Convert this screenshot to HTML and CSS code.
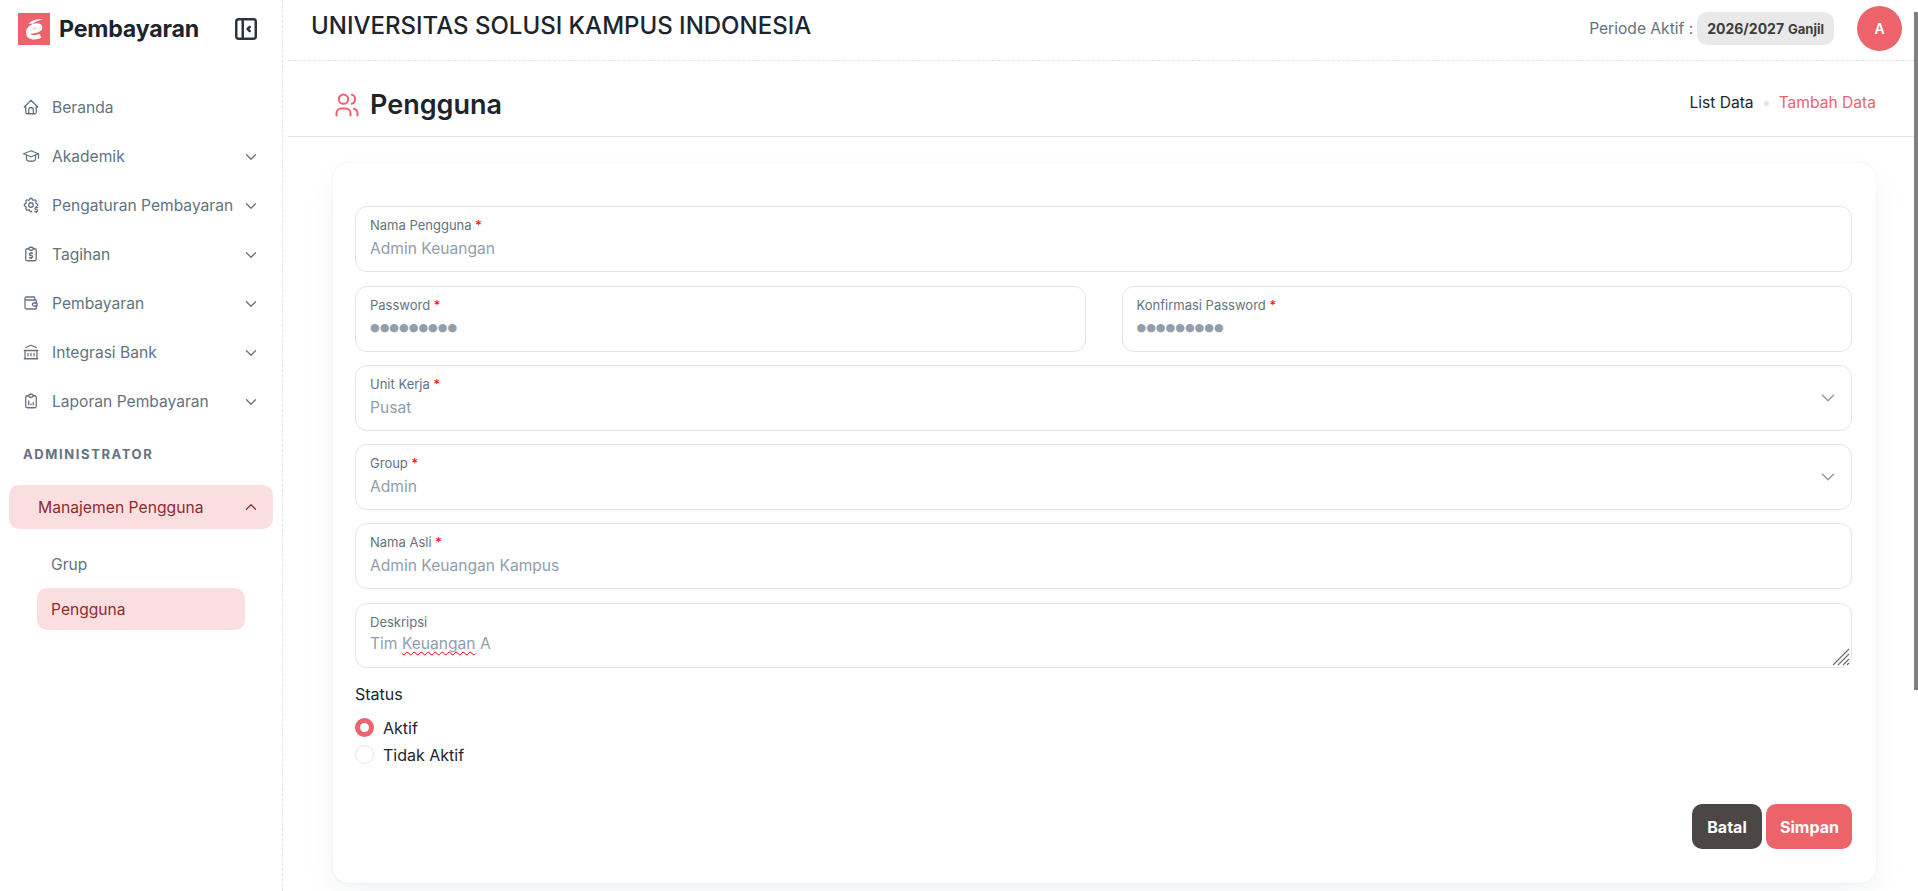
FILE: index.html
```html
<!DOCTYPE html>
<html lang="id">
<head>
<meta charset="utf-8">
<title>Pengguna - Pembayaran</title>
<link rel="stylesheet" href="styles.css">
</head>
<body>
<aside class="sidebar">
  <div class="brand">
    <svg class="logo" viewBox="0 0 32 32"><rect class="logo-bg" width="32" height="32"/><path d="M9.5 18.8 C14 19 20.5 17.5 22 15 C23 12.8 19 11.8 15.5 13 C11 14.8 9 18.5 10.5 21.8 C12 24.8 17.5 25.2 22.5 22.8" stroke="#fff" stroke-width="4.4" stroke-linecap="butt"/><path class="logo-cap" d="M10.5 10.5 C14 7 20 5.6 25 6.6 C20.5 7.6 17.5 8.6 14.5 11 Z"/></svg>
    <span class="brand-name">Pembayaran</span>
    <svg class="collapse" viewBox="0 0 24 24"><rect x="3" y="3" width="18" height="18" rx="2"/><path d="M9 3v18M15.5 10l-2 2l2 2"/></svg>
  </div>
  <nav class="nav">
    <a class="item"><svg class="ico" viewBox="0 0 24 24"><path d="M5 12l-2 0l9 -9l9 9l-2 0"/><path d="M5 12v7a2 2 0 0 0 2 2h10a2 2 0 0 0 2 -2v-7"/><path d="M9 21v-6a2 2 0 0 1 2 -2h2a2 2 0 0 1 2 2v6"/></svg><span class="lbl">Beranda</span></a>
    <a class="item"><svg class="ico" viewBox="0 0 24 24"><path d="M22 9l-10 -4l-10 4l10 4l10 -4v6"/><path d="M6 10.6v5.4a6 3 0 0 0 12 0v-5.4"/></svg><span class="lbl">Akademik</span><svg class="chev" viewBox="0 0 24 24"><path d="M6 9l6 6l6 -6"/></svg></a>
    <a class="item"><svg class="ico" viewBox="0 0 24 24"><path d="M10.325 4.317c.426 -1.756 2.924 -1.756 3.35 0a1.724 1.724 0 0 0 2.573 1.066c1.543 -.94 3.31 .826 2.37 2.37a1.724 1.724 0 0 0 1.065 2.572c1.756 .426 1.756 2.924 0 3.35a1.724 1.724 0 0 0 -1.066 2.573c.94 1.543 -.826 3.31 -2.37 2.37a1.724 1.724 0 0 0 -2.572 1.065c-.426 1.756 -2.924 1.756 -3.35 0a1.724 1.724 0 0 0 -2.573 -1.066c-1.543 .94 -3.31 -.826 -2.37 -2.37a1.724 1.724 0 0 0 -1.065 -2.572c-1.756 -.426 -1.756 -2.924 0 -3.35a1.724 1.724 0 0 0 1.066 -2.573c-.94 -1.543 .826 -3.31 2.37 -2.37c1 .608 2.296 .07 2.572 -1.065z"/><circle cx="12" cy="12" r="3"/><circle class="knock" cx="19" cy="19" r="5.5"/><path d="M21 15.5h-2.5a1.2 1.2 0 0 0 0 2.6h1a1.2 1.2 0 0 1 0 2.6h-2.5M19 14v1.5m0 5.2v1.3"/></svg><span class="lbl">Pengaturan Pembayaran</span><svg class="chev" viewBox="0 0 24 24"><path d="M6 9l6 6l6 -6"/></svg></a>
    <a class="item"><svg class="ico" viewBox="0 0 24 24"><path d="M9 5h-2a2 2 0 0 0 -2 2v12a2 2 0 0 0 2 2h10a2 2 0 0 0 2 -2v-12a2 2 0 0 0 -2 -2h-2"/><path d="M9 5a2 2 0 0 1 2 -2h2a2 2 0 0 1 2 2a2 2 0 0 1 -2 2h-2a2 2 0 0 1 -2 -2z"/><path d="M14 11h-2.5a1.5 1.5 0 0 0 0 3h1a1.5 1.5 0 0 1 0 3h-2.5"/><path d="M12 17v1m0 -8v1"/></svg><span class="lbl">Tagihan</span><svg class="chev" viewBox="0 0 24 24"><path d="M6 9l6 6l6 -6"/></svg></a>
    <a class="item"><svg class="ico" viewBox="0 0 24 24"><path d="M17 8v-3a1 1 0 0 0 -1 -1h-10a2 2 0 0 0 0 4h12a1 1 0 0 1 1 1v3m0 4v3a1 1 0 0 1 -1 1h-12a2 2 0 0 1 -2 -2v-12"/><path d="M20 12v4h-4a2 2 0 0 1 0 -4h4"/></svg><span class="lbl">Pembayaran</span><svg class="chev" viewBox="0 0 24 24"><path d="M6 9l6 6l6 -6"/></svg></a>
    <a class="item"><svg class="ico" viewBox="0 0 24 24"><path d="M3 21h18M3 10h18M5 6l7 -3l7 3M4 10v11M20 10v11M8 14v3M12 14v3M16 14v3"/></svg><span class="lbl">Integrasi Bank</span><svg class="chev" viewBox="0 0 24 24"><path d="M6 9l6 6l6 -6"/></svg></a>
    <a class="item"><svg class="ico" viewBox="0 0 24 24"><path d="M9 5h-2a2 2 0 0 0 -2 2v12a2 2 0 0 0 2 2h10a2 2 0 0 0 2 -2v-12a2 2 0 0 0 -2 -2h-2"/><path d="M9 5a2 2 0 0 1 2 -2h2a2 2 0 0 1 2 2a2 2 0 0 1 -2 2h-2a2 2 0 0 1 -2 -2z"/><path d="M9 17v-5M12 17v-1M15 17v-3"/></svg><span class="lbl">Laporan Pembayaran</span><svg class="chev" viewBox="0 0 24 24"><path d="M6 9l6 6l6 -6"/></svg></a>
  </nav>
  <div class="section">ADMINISTRATOR</div>
  <a class="group-open"><span class="lbl">Manajemen Pengguna</span><svg class="chev" viewBox="0 0 24 24"><path d="M6 15l6 -6l6 6"/></svg></a>
  <div class="sub">
    <a class="sub-item">Grup</a>
    <a class="sub-item active">Pengguna</a>
  </div>
</aside>

<main class="main">
  <header class="topbar">
    <h1 class="org">UNIVERSITAS SOLUSI KAMPUS INDONESIA</h1>
    <div class="top-right">
      <span class="period">Periode Aktif :</span>
      <span class="chip"><b>2026/2027</b> <b class="chip-sm">Ganjil</b></span>
      <span class="avatar">A</span>
    </div>
  </header>

  <div class="pagehead">
    <div class="title">
      <svg class="title-ico" viewBox="0 0 24 24"><path d="M5 7a4 4 0 1 0 8 0a4 4 0 1 0 -8 0"/><path d="M3 21v-2a4 4 0 0 1 4 -4h4a4 4 0 0 1 4 4v2"/><path d="M16 3.13a4 4 0 0 1 0 7.75"/><path d="M21 21v-2a4 4 0 0 0 -3 -3.85"/></svg>
      <h2>Pengguna</h2>
    </div>
    <div class="crumbs"><span>List Data</span><i class="dot"></i><span class="crumb-red">Tambah Data</span></div>
  </div>

  <section class="content">
    <form class="card">
      <div class="fields">
        <label class="field"><span class="flabel">Nama Pengguna <em>*</em></span><input class="fval" value="Admin Keuangan"></label>
        <div class="two">
          <label class="field"><span class="flabel">Password <em>*</em></span><span class="fval pw">●●●●●●●●●</span></label>
          <label class="field"><span class="flabel">Konfirmasi Password <em>*</em></span><span class="fval pw">●●●●●●●●●</span></label>
        </div>
        <label class="field has-chev"><span class="flabel">Unit Kerja <em>*</em></span><span class="fval">Pusat</span><svg class="fchev" viewBox="0 0 24 24"><path d="M6 9l6 6l6 -6"/></svg></label>
        <label class="field has-chev"><span class="flabel">Group <em>*</em></span><span class="fval">Admin</span><svg class="fchev" viewBox="0 0 24 24"><path d="M6 9l6 6l6 -6"/></svg></label>
        <label class="field"><span class="flabel">Nama Asli <em>*</em></span><input class="fval" value="Admin Keuangan Kampus"></label>
        <div class="field area"><span class="flabel">Deskripsi</span><span class="fval">Tim <span class="typo">Keuangan</span> A</span>
          <svg class="grip" viewBox="0 0 18 18"><path d="M17 1L1 17M17 6L6 17M17 11L11 17M17 15L15 17"/></svg>
        </div>
      </div>
      <div class="status">
        <div class="status-h">Status</div>
        <div class="radio"><i class="rdot on"></i>Aktif</div>
        <div class="radio"><i class="rdot"></i>Tidak Aktif</div>
      </div>
      <div class="actions">
        <button type="button" class="btn dark">Batal</button>
        <button type="button" class="btn red">Simpan</button>
      </div>
    </form>
  </section>
</main>
<div class="scrollthumb"></div>
</body>
</html>
```
FILE: styles.css
```css
* { box-sizing: border-box; }
html, body { height: 100%; }
body {
  margin: 0;
  display: flex;
  overflow: hidden;
  background: #fff;
  color: #1c252e;
  font-family: Inter, "Liberation Sans", sans-serif;
  font-size: 15px;
}
svg { fill: none; stroke: currentColor; stroke-width: 1.7; stroke-linecap: round; stroke-linejoin: round; flex: none; display: block; }
a { display: flex; align-items: center; color: inherit; }

/* sidebar */
.sidebar { width: 283px; flex: none; height: 891px; border-right: 1px dashed #dfe3e8; padding: 13px 9px 0; color: #637381; }
.brand { display: flex; align-items: center; height: 32px; margin-left: 9px; }
.logo { width: 32px; height: 32px; }
.logo-bg { fill: #ee636b; stroke: none; }
.logo-cap { fill: #fff; stroke: none; }
.brand-name { margin-left: 9px; font-size: 23.2px; font-weight: 700; color: #1c252e; letter-spacing: -0.2px; }
.collapse { width: 26px; height: 26px; margin-left: auto; margin-right: 14px; color: #2b3440; stroke-width: 2.3; }
.nav { margin-top: 38px; display: flex; flex-direction: column; }
.item { height: 49px; padding-left: 13px; padding-right: 13px; font-size: 15.6px; }
.ico { width: 18px; height: 18px; margin-right: 12px; stroke-width: 1.7; position: relative; top: -1px; }
.knock { fill: #fff; stroke: none; }
.lbl { flex: 1; white-space: nowrap; }
.chev { width: 18px; height: 18px; }
.section { margin: 18px 0 0 14px; font-size: 13px; font-weight: 700; letter-spacing: 1.6px; line-height: 20px; color: #637381; }
.group-open { margin-top: 21px; height: 44px; width: 264px; padding: 0 13px 0 29px; border-radius: 10px; background: #fbdfe0; color: #8f2b31; font-size: 15.7px; }
.sub { margin: 14px 0 0 28px; width: 208px; display: flex; flex-direction: column; gap: 3px; }
.sub-item { height: 42px; padding-left: 14px; font-size: 15.6px; border-radius: 10px; }
.sub-item.active { background: #fbdfe0; color: #8f2b31; }

/* main */
.main { flex: 1; min-width: 0; margin: 0 4px 0 5px; display: flex; flex-direction: column; }
.topbar { height: 61px; flex: none; display: flex; align-items: center; justify-content: space-between; padding: 0 12px 7px 23px; border-bottom: 1px dashed #dfe3e8; }
.org { margin: 0 0 2px; font-size: 24px; font-weight: 500; color: #1c252e; white-space: nowrap; }
.top-right { display: flex; align-items: center; position: relative; top: 2px; }
.period { font-size: 15.6px; color: #637381; margin-right: 4px; }
.chip { height: 33px; padding: 0 10px; display: flex; align-items: center; gap: 4px; border-radius: 10px; background: #e9e9e9; color: #403c3c; font-size: 14px; }
.chip-sm { font-size: 13px; }
.avatar { width: 45px; height: 45px; margin-left: 23px; border-radius: 50%; background: #ee636b; color: #fff; display: flex; align-items: center; justify-content: center; font-size: 14px; font-weight: 600; }

.pagehead { height: 76px; flex: none; display: flex; align-items: center; justify-content: space-between; padding: 0 38px 0 45px; border-bottom: 1px solid #e2e4e9; }
.title { display: flex; align-items: center; gap: 9px; position: relative; top: 6px; }
.title-ico { width: 28px; height: 28px; color: #ee636b; stroke-width: 1.7; }
.title h2 { margin: 0; font-size: 27px; font-weight: 600; color: #1c252e; }
.crumbs { display: flex; align-items: center; font-size: 15.6px; position: relative; top: 4px; }
.dot { width: 5px; height: 5px; border-radius: 50%; background: #dfe3e8; margin: 2px 10px 0 10px; }
.crumb-red { color: #ee636b; }

.content { padding: 26px 38px 0 45px; }
.card { height: 720px; padding: 43px 24px 0 22px; border-radius: 16px; background: #fff; box-shadow: 0 0 2px rgba(145,158,171,.16), 0 12px 30px -4px rgba(145,158,171,.14); }
.fields { display: flex; flex-direction: column; gap: 13px; }
.two { display: grid; grid-template-columns: 1fr 1fr; gap: 36px; margin-top: 1px; }
.field { position: relative; display: flex; flex-direction: column; height: 66px; padding: 10px 14px 0; border: 1px solid #e2e4e9; border-radius: 12px; }
.flabel { font-size: 13px; line-height: 16px; color: #637381; }
.flabel em { color: #f00; font-style: normal; }
.fval { margin: 4px 0 0; padding: 0; border: 0; outline: 0; background: none; width: 100%; font: inherit; font-size: 15.6px; line-height: 24px; height: 24px; color: #919eab; }
.pw { margin-top: 3px; font-family: "DejaVu Sans", sans-serif; font-size: 11.1px; }
.fchev { position: absolute; right: 12px; top: 21px; width: 22px; height: 22px; color: #919eab; }
.area { height: 65px; margin-top: 1px; }
.area .fval { margin-top: 2px; }
.typo { text-decoration: underline wavy #f00 1px; text-decoration-skip-ink: none; text-underline-offset: 2px; }
.grip { position: absolute; right: 1px; bottom: 1px; width: 18px; height: 18px; color: #6f6f6f; stroke-width: 1.2; stroke-linecap: butt; }
.status { margin-top: 15px; }
.status-h { font-size: 16px; line-height: 22px; margin-bottom: 9px; }
.radio { display: flex; align-items: center; height: 27px; font-size: 16px; }
.rdot { width: 19px; height: 19px; margin-right: 9px; border-radius: 50%; border: 1px solid #e2e4e9; background: #fff; }
.rdot.on { border: 5px solid #ee636b; }
.actions { display: flex; justify-content: flex-end; gap: 4px; margin-top: 36px; }
.btn { height: 45px; padding: 0 14px; border: 0; border-radius: 10px; color: #fff; font: inherit; font-size: 16px; font-weight: 700; }
.btn.dark { width: 70px; background: #4c4645; }
.btn.red { width: 86px; background: #ec636a; }

/* page scrollbar thumb drawn over the window edge */
.scrollthumb { position: fixed; right: 0; top: 12px; width: 4px; height: 678px; background: #808080; }
```
